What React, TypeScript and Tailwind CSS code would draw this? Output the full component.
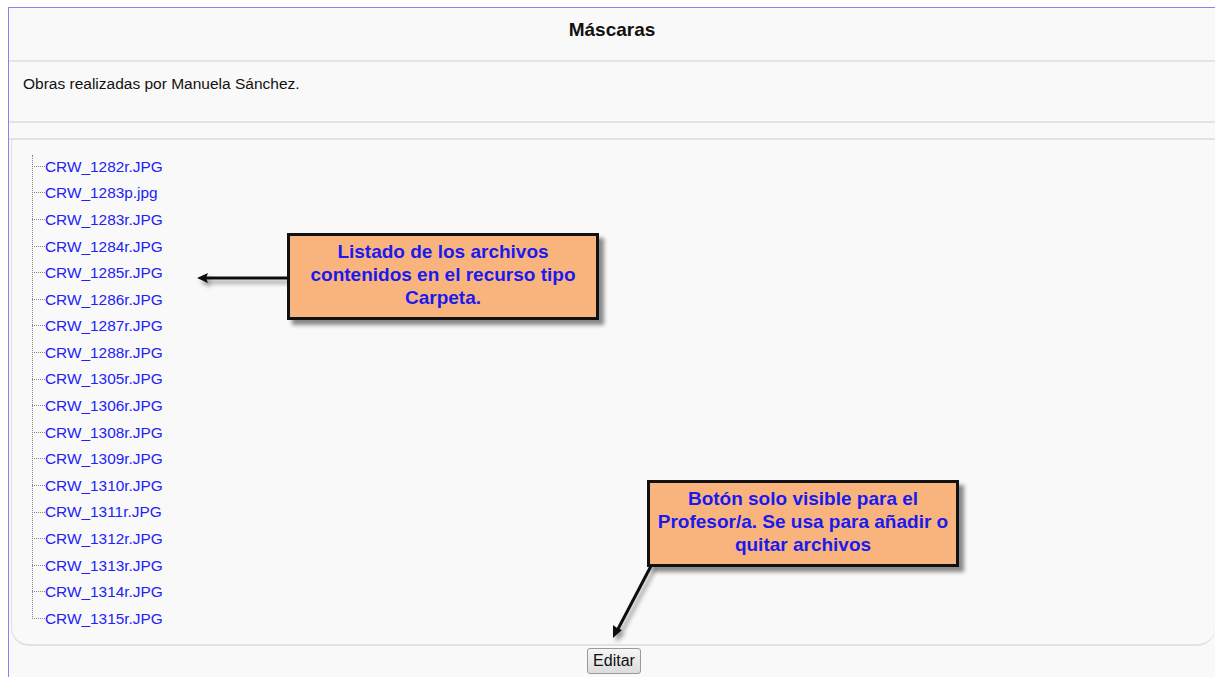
import React from "react";

const files = [
  "CRW_1282r.JPG",
  "CRW_1283p.jpg",
  "CRW_1283r.JPG",
  "CRW_1284r.JPG",
  "CRW_1285r.JPG",
  "CRW_1286r.JPG",
  "CRW_1287r.JPG",
  "CRW_1288r.JPG",
  "CRW_1305r.JPG",
  "CRW_1306r.JPG",
  "CRW_1308r.JPG",
  "CRW_1309r.JPG",
  "CRW_1310r.JPG",
  "CRW_1311r.JPG",
  "CRW_1312r.JPG",
  "CRW_1313r.JPG",
  "CRW_1314r.JPG",
  "CRW_1315r.JPG",
];

function Callout({ className, lines }: { className: string; lines: string[] }) {
  return (
    <div
      className={`absolute w-[312px] h-[87px] border-[3px] border-[#111] bg-[#f9b47e] shadow-[5px_5px_4px_rgba(0,0,0,0.45)] flex flex-col items-center justify-center pb-[4px] text-center text-[19px] leading-[23px] font-bold text-[#1a1aee] whitespace-nowrap ${className}`}
    >
      {lines.map((l) => (
        <p key={l}>{l}</p>
      ))}
    </div>
  );
}

export default function App() {
  return (
    <div className="relative w-[1215px] h-[677px] overflow-hidden bg-white pt-[7px] font-['Liberation_Sans',Arial,sans-serif]">
      <div className="ml-[8px] h-[670px] border-l border-t border-[#8585ee] bg-[#f9f9f9] flex flex-col">
        <div className="h-[54px] flex items-center justify-center border-b-2 border-[#e6e6e6] pb-[8px]">
          <h2 className="text-[19px] font-bold text-[#111]">Máscaras</h2>
        </div>
        <div className="h-[61px] border-b-2 border-[#e3e3e3] pl-[14px] pt-[10px]">
          <p className="text-[15.5px] text-[#111]">Obras realizadas por Manuela Sánchez.</p>
        </div>
        <div className="h-[17px] border-b-2 border-[#e3e3e3]"></div>
        <div className="ml-[2px] h-[506px] border-b-2 border-l border-[#e2e2e2] rounded-b-[18px] pt-[13px] pl-[20px]">
          <ul className="relative">
            <li className="absolute left-0 top-[2px] h-[464px] border-l border-dotted border-[#888]"></li>
            {files.map((f) => (
              <li key={f} className="h-[26.6px] flex items-center">
                <span className="w-[13px] border-t border-dotted border-[#888]"></span>
                <a href="#" className="text-[15.4px] text-[#2222f5]">
                  {f}
                </a>
              </li>
            ))}
          </ul>
        </div>
        <div className="flex justify-center pt-[2px] pl-[4px]">
          <button className="h-[26px] px-[5px] rounded-[3px] border border-[#9a9a9a] bg-gradient-to-b from-[#f6f6f6] to-[#dcdcdc] text-[16px] text-[#111]">
            Editar
          </button>
        </div>
      </div>

      <svg className="absolute left-0 top-0" width="1215" height="677">
        <defs>
          <filter id="sh" x="-20%" y="-20%" width="140%" height="140%">
            <feDropShadow dx="3" dy="4" stdDeviation="2" floodColor="#000" floodOpacity="0.4" />
          </filter>
        </defs>
        <g filter="url(#sh)">
          <line x1="288" y1="278" x2="204" y2="278" stroke="#111" strokeWidth="3" />
          <polygon points="197,278 208,273 206,278 208,283" fill="#111" />
          <line x1="651" y1="566" x2="618" y2="629" stroke="#111" strokeWidth="3" />
          <polygon points="613,638 613,625 617,628 622,630" fill="#111" />
        </g>
      </svg>

      <Callout
        className="left-[287px] top-[233px]"
        lines={["Listado de los archivos", "contenidos en el recurso tipo", "Carpeta."]}
      />
      <Callout
        className="left-[647px] top-[480px]"
        lines={["Botón solo visible para el", "Profesor/a. Se usa para añadir o", "quitar archivos"]}
      />
    </div>
  );
}
